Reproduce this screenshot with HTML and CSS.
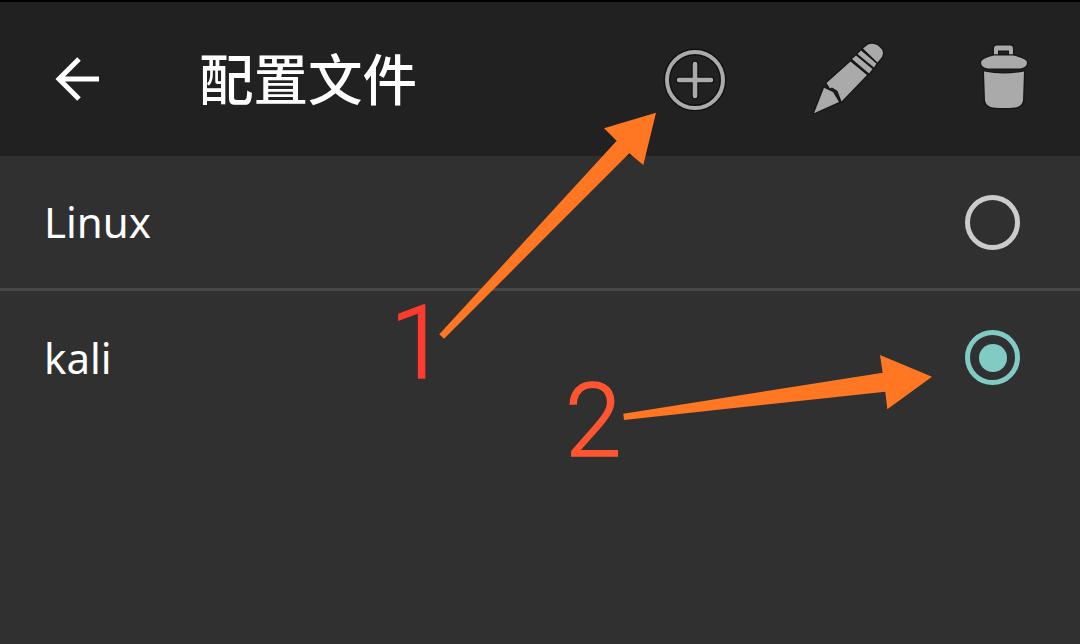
FILE: index.html
```html
<!DOCTYPE html>
<html lang="zh">
<head>
<meta charset="utf-8">
<title>配置文件</title>
<link rel="stylesheet" href="styles.css">
</head>
<body>
<div class="screen">
  <header class="toolbar">
    <svg class="back" viewBox="0 0 52 52" aria-hidden="true"><path d="M47 26H6M27 6 7 26l20 20"/></svg>
    <h1 class="title">配置文件</h1>
    <div class="actions">
      <svg class="icon icon-add" viewBox="0 0 64 64" aria-hidden="true">
        <circle class="halo" cx="32" cy="33" r="28"/>
        <circle class="ring" cx="32" cy="33" r="28"/>
        <path class="halo-line" d="M16 33H48M32 17V49"/>
        <path class="cross" d="M16 33H48M32 17V49"/>
      </svg>
      <svg class="icon icon-edit" viewBox="9 8.500 80 80" aria-hidden="true">
        <g class="solid">
          <path d="M14 82.700 24 57.300 33 61.500 39 71.500Z"/>
          <path d="M26.500 52.500 50.500 31 67 44.500 41.500 71 37.500 60.500 32 57 30 58Z"/>
          <path d="M52 28.500 56 25 72.500 38.500 69 43Z"/>
          <path d="M57.500 23.500 61 20 76.500 33 74 37Z"/>
          <path d="M63 18 68 14Q73 12 78 15L82 19Q84 23 81.500 27L77.500 32Z"/>
        </g>
      </svg>
      <svg class="icon icon-delete" viewBox="11 8.500 64 80" aria-hidden="true">
        <g class="solid">
          <path d="M34 26V18Q34 15 37 15H50Q53 15 53 18V26H49V20H38V26Z"/>
          <path d="M21 32Q21 28 34 25H53Q67 28 67 32Q67 37 60 38H28Q21 37 21 32Z"/>
          <path d="M24 41Q44 45 64 41L63 70Q62 76 55 77Q44 78 33 77Q26 76 25 70Z"/>
        </g>
      </svg>
    </div>
  </header>
  <main class="list">
    <div class="row row-first">
      <span class="name">Linux</span>
      <span class="radio"></span>
    </div>
    <div class="divider"></div>
    <div class="row">
      <span class="name">kali</span>
      <span class="radio radio-on"><span class="radio-dot"></span></span>
    </div>
  </main>
  <svg class="arrows" viewBox="0 0 1080 644" aria-hidden="true">
    <path d="M439.300 334.300 444 338.700 629.300 153.300 643.300 165 656 112.700 604 128.300 616.700 140.700Z"/>
    <path d="M623.300 413.700 624 420 885.300 391.700 887.300 409.300 932 376.700 880 355 882.700 372.700Z"/>
  </svg>
  <span class="mark mark-one">1</span>
  <span class="mark mark-two">2</span>
</div>
</body>
</html>
```

FILE: styles.css
```css
* { box-sizing: border-box; }
html, body { margin: 0; padding: 0; }
body { background: #303030; }
.screen {
  position: relative;
  width: 1080px;
  height: 644px;
  overflow: hidden;
  background: #303030;
  font-family: "Noto Sans", "Noto Sans CJK SC", sans-serif;
}
.toolbar {
  display: flex;
  align-items: center;
  height: 156px;
  border-top: 2px solid #000;
  background: #212121;
  padding: 0 45px 0 52px;
}
.back { width: 52px; height: 52px; flex: none; }
.back path { fill: none; stroke: #fff; stroke-width: 5; }
.title {
  margin: 0 0 3px 95px;
  color: #fff;
  font-family: "Noto Sans CJK SC", sans-serif;
  font-size: 54.500px;
  font-weight: 500;
  line-height: 1;
}
.actions {
  display: flex;
  align-items: center;
  gap: 82px;
  margin-left: auto;
}
.icon { display: block; height: 80px; flex: none; }
.icon-add { width: 64px; height: 64px; }
.icon-edit { width: 80px; }
.icon-delete { width: 64px; }
.halo, .ring { fill: none; }
.halo { stroke: #111; stroke-width: 7; }
.ring { stroke: #aaa; stroke-width: 4; }
.halo-line, .cross { fill: none; stroke-linecap: round; }
.halo-line { stroke: #111; stroke-width: 7; }
.cross { stroke: #aaa; stroke-width: 4.500; }
.solid path {
  fill: #aaa;
  stroke: #151515;
  stroke-width: 2.500;
  stroke-linejoin: round;
  paint-order: stroke;
}
.list { display: flex; flex-direction: column; }
.row {
  display: flex;
  align-items: center;
  justify-content: space-between;
  height: 133px;
  padding: 0 60px 0 44px;
}
.row-first { height: 132px; }
.divider { height: 3px; background: #484848; }
.name {
  color: #fff;
  font-size: 42px;
  line-height: 1;
}
.radio {
  display: flex;
  align-items: center;
  justify-content: center;
  width: 55px;
  height: 55px;
  border: 5px solid #ccc;
  border-radius: 50%;
}
.radio-on { border-color: #80cbc4; }
.radio-dot {
  width: 28px;
  height: 28px;
  border-radius: 50%;
  background: #80cbc4;
}
.arrows {
  position: absolute;
  left: 0;
  top: 0;
  width: 1080px;
  height: 644px;
}
.arrows path { fill: #ff7722; }
.mark {
  position: absolute;
  font-family: Roboto, sans-serif;
  font-size: 102px;
  font-weight: 300;
  line-height: 1;
  -webkit-text-stroke: 1.500px currentColor;
}
.mark-one { left: 390px; top: 292px; color: #ff3b30; }
.mark-two { left: 565px; top: 370px; color: #ff5530; }
```
